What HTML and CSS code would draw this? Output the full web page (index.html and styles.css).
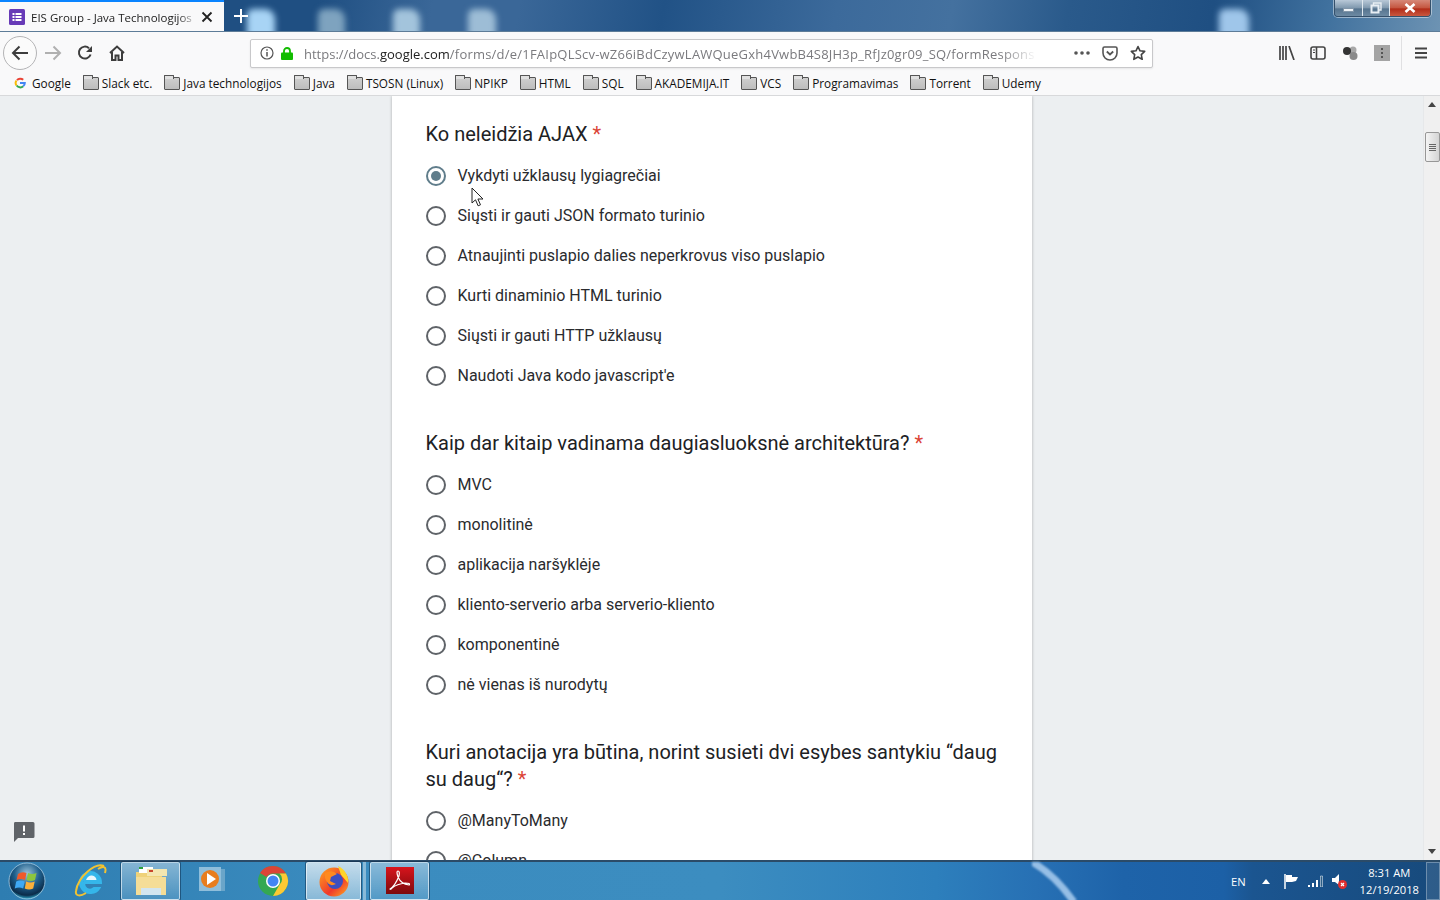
FILE: index.html
```html
<!DOCTYPE html>
<html lang="lt">
<head>
<meta charset="utf-8">
<title>EIS Group - Java Technologijos</title>
<link rel="stylesheet" href="styles.css">
</head>
<body>
<div class="screen">
  <header class="titlebar">
    <i class="patch p1"></i><i class="patch p2"></i><i class="patch p3"></i><i class="patch p4"></i><i class="patch p5"></i>
    <div class="tab">
      <svg class="favicon" viewBox="0 0 16 16"><rect width="16" height="16" rx="1.5" fill="#673ab7"/><g fill="#fff"><rect x="3.5" y="4" width="2" height="2"/><rect x="6.5" y="4" width="6" height="2"/><rect x="3.5" y="7" width="2" height="2"/><rect x="6.5" y="7" width="6" height="2"/><rect x="3.5" y="10" width="2" height="2"/><rect x="6.5" y="10" width="6" height="2"/></g></svg>
      <span class="tab-title">EIS Group - Java Technologijos</span>
      <svg class="tab-close" viewBox="0 0 12 12"><path d="M1.5 1.5l9 9M10.5 1.5l-9 9" stroke="#222" stroke-width="1.8" fill="none"/></svg>
    </div>
    <svg class="newtab" viewBox="0 0 14 14"><path d="M7 0v14M0 7h14" stroke="#fff" stroke-width="2" fill="none"/></svg>
    <div class="winctl">
      <div class="wbtn wmin"><span class="minbar"></span></div>
      <div class="wbtn wmax"><svg viewBox="0 0 12 12" width="12" height="12"><path d="M3.500 3V1h7.500v7H9" fill="none" stroke="#e8eef4" stroke-width="1.400"/><rect x="1.500" y="3.500" width="7" height="7" fill="none" stroke="#e8eef4" stroke-width="2"/></svg></div>
      <div class="wbtn wclose"><svg viewBox="0 0 12 10" width="12" height="10"><path d="M1.500 1l9 8M10.500 1l-9 8" stroke="#fff" stroke-width="2.600" fill="none"/></svg></div>
    </div>
  </header>

  <nav class="toolbar">
    <div class="backbtn"><svg viewBox="0 0 18 16" width="18" height="16"><path d="M17 8H2M8.500 1.500L2 8l6.500 6.500" fill="none" stroke="#3d3d3d" stroke-width="2"/></svg></div>
    <svg class="tb-ico fwd" viewBox="0 0 18 16" width="18" height="16"><path d="M1 8h15M9.500 1.500L16 8l-6.500 6.500" fill="none" stroke="#b0b0b0" stroke-width="2"/></svg>
    <svg class="tb-ico reload" viewBox="0 0 16 16" width="16" height="16"><path d="M13.600 9.500A6 6 0 1 1 12 3.200" fill="none" stroke="#3d3d3d" stroke-width="2"/><path d="M15 1v6H9z" fill="#3d3d3d"/></svg>
    <svg class="tb-ico home" viewBox="0 0 16 16" width="16" height="16"><path d="M1 8l7-6.500L15 8M3 7v8h3.500v-4.500h3V15H13V7" fill="none" stroke="#3d3d3d" stroke-width="2"/></svg>
    <div class="urlbar">
      <svg class="info" viewBox="0 0 14 14" width="14" height="14"><circle cx="7" cy="7" r="6" fill="none" stroke="#555" stroke-width="1.200"/><path d="M7 6v4.500M7 3.300v1.500" stroke="#555" stroke-width="1.500"/></svg>
      <svg class="lock" viewBox="0 0 12 13" width="12" height="13"><path d="M3 6V4a3 3 0 0 1 6 0v2" fill="none" stroke="#12bc00" stroke-width="1.800"/><rect y="5.500" width="12" height="7.500" rx="1" fill="#12bc00"/></svg>
      <div class="url"><span class="url-dim">https://docs.</span><span class="url-host">google.com</span><span class="url-dim url-path">/forms/d/e/1FAIpQLScv-wZ66iBdCzywLAWQueGxh4VwbB4S8JH3p_RfJz0gr09_SQ/formRespons</span></div>
      <svg class="dots" viewBox="0 0 16 4" width="16" height="4"><circle cx="2" cy="2" r="1.800" fill="#555"/><circle cx="8" cy="2" r="1.800" fill="#555"/><circle cx="14" cy="2" r="1.800" fill="#555"/></svg>
      <svg class="pocket" viewBox="0 0 16 15" width="16" height="15"><path d="M1 2.500a1.500 1.500 0 0 1 1.500-1.500h11A1.500 1.500 0 0 1 15 2.500V7A7 7 0 0 1 1 7z" fill="none" stroke="#555" stroke-width="1.600"/><path d="M4.800 5.500L8 8.500l3.200-3" fill="none" stroke="#555" stroke-width="1.800"/></svg>
      <svg class="star" viewBox="0 0 16 16" width="16" height="16"><path d="M8 1.500l2 4.300 4.700.6-3.400 3.200.9 4.700L8 12l-4.200 2.300.9-4.700L1.300 6.400 6 5.800z" fill="none" stroke="#444" stroke-width="1.600" stroke-linejoin="round"/></svg>
    </div>
    <div class="tools">
      <svg class="tool-lib" viewBox="0 0 16 14" width="16" height="14"><path d="M1 0v14M4 0v14M7 0v14M10 0l5 14" stroke="#444" stroke-width="1.700" fill="none"/></svg>
      <svg viewBox="0 0 16 14" width="16" height="14"><rect x="1" y="1" width="14" height="12" rx="2" fill="none" stroke="#444" stroke-width="1.600"/><path d="M6.500 1v12" stroke="#444" stroke-width="1.600"/><path d="M3 4h2M3 6.500h2" stroke="#444"/></svg>
      <svg viewBox="0 0 16 16" width="16" height="16"><circle cx="11" cy="5" r="3.500" fill="#a8a8a8"/><circle cx="11.500" cy="11" r="4" fill="#8a8a8a"/><circle cx="5" cy="6" r="4" fill="#333"/></svg>
      <div class="ext"><span></span><span></span><span></span></div>
      <span class="tools-sep"></span>
      <svg viewBox="0 0 14 12" width="14" height="12"><path d="M1 1.500h12M1 6h12M1 10.500h12" stroke="#444" stroke-width="1.800"/></svg>
    </div>
  </nav>

  <div class="bookmarks">
    <div class="bm bm-g"><svg viewBox="0 0 12 12" width="12" height="12"><path d="M3 3.200A4.300 4.300 0 0 1 9.200 2.800" fill="none" stroke="#ea4335" stroke-width="2"/><path d="M2.500 3.500a4.300 4.300 0 0 0 0 5" fill="none" stroke="#fbbc05" stroke-width="2"/><path d="M2.700 8.500a4.300 4.300 0 0 0 6.500.7" fill="none" stroke="#34a853" stroke-width="2"/><path d="M6 6h4.800q0 2.200-1.600 3.200" fill="none" stroke="#4285f4" stroke-width="2"/></svg><span>Google</span></div>
    <div class="bm"><i class="folder"></i><span>Slack etc.</span></div>
    <div class="bm"><i class="folder"></i><span>Java technologijos</span></div>
    <div class="bm"><i class="folder"></i><span>Java</span></div>
    <div class="bm"><i class="folder"></i><span>TSOSN (Linux)</span></div>
    <div class="bm"><i class="folder"></i><span>NPIKP</span></div>
    <div class="bm"><i class="folder"></i><span>HTML</span></div>
    <div class="bm"><i class="folder"></i><span>SQL</span></div>
    <div class="bm"><i class="folder"></i><span>AKADEMIJA.IT</span></div>
    <div class="bm"><i class="folder"></i><span>VCS</span></div>
    <div class="bm"><i class="folder"></i><span>Programavimas</span></div>
    <div class="bm"><i class="folder"></i><span>Torrent</span></div>
    <div class="bm"><i class="folder"></i><span>Udemy</span></div>
  </div>

  <main class="viewport">
    <div class="page">
      <div class="card">
        <section class="question">
          <h2 class="q-title">Ko neleidžia AJAX <span class="req">*</span></h2>
          <div class="opt"><i class="radio on"></i><span>Vykdyti užklausų lygiagrečiai</span></div>
          <div class="opt"><i class="radio"></i><span>Siųsti ir gauti JSON formato turinio</span></div>
          <div class="opt"><i class="radio"></i><span>Atnaujinti puslapio dalies neperkrovus viso puslapio</span></div>
          <div class="opt"><i class="radio"></i><span>Kurti dinaminio HTML turinio</span></div>
          <div class="opt"><i class="radio"></i><span>Siųsti ir gauti HTTP užklausų</span></div>
          <div class="opt"><i class="radio"></i><span>Naudoti Java kodo javascript'e</span></div>
        </section>
        <section class="question">
          <h2 class="q-title">Kaip dar kitaip vadinama daugiasluoksnė architektūra? <span class="req">*</span></h2>
          <div class="opt"><i class="radio"></i><span>MVC</span></div>
          <div class="opt"><i class="radio"></i><span>monolitinė</span></div>
          <div class="opt"><i class="radio"></i><span>aplikacija naršyklėje</span></div>
          <div class="opt"><i class="radio"></i><span>kliento-serverio arba serverio-kliento</span></div>
          <div class="opt"><i class="radio"></i><span>komponentinė</span></div>
          <div class="opt"><i class="radio"></i><span>nė vienas iš nurodytų</span></div>
        </section>
        <section class="question">
          <h2 class="q-title">Kuri anotacija yra būtina, norint susieti dvi esybes santykiu “daug su daug“? <span class="req">*</span></h2>
          <div class="opt"><i class="radio"></i><span>@ManyToMany</span></div>
          <div class="opt"><i class="radio"></i><span>@Column</span></div>
        </section>
      </div>
    </div>
    <div class="scrollbar">
      <svg class="sb-arrow" viewBox="0 0 8 5" width="8" height="5"><path d="M4 0l4 5H0z" fill="#444"/></svg>
      <div class="sb-thumb"><span></span><span></span><span></span><span></span></div>
      <svg class="sb-arrow sb-down" viewBox="0 0 8 5" width="8" height="5"><path d="M0 0h8L4 5z" fill="#444"/></svg>
    </div>
    <svg class="feedback" viewBox="0 0 22 21" width="22" height="21"><path d="M2 1h18a1.500 1.500 0 0 1 1.500 1.500v13A1.500 1.500 0 0 1 20 17H5l-4 4V2.500A1.500 1.500 0 0 1 2 1z" fill="#5f6368"/><path d="M10 4.500h2v6h-2zM10 12h2v2h-2z" fill="#fff"/></svg>
    <svg class="cursor" viewBox="0 0 13 20" width="13" height="20"><path d="M1 1v15l3.500-3.200 2.600 6 2.400-1-2.600-5.800H12z" fill="#fff" stroke="#222" stroke-width="1"/></svg>
  </main>

  <footer class="taskbar">
    <svg class="streak" viewBox="0 0 60 40" width="60" height="40"><path d="M0 0Q22 12 42 40" fill="none" stroke="#a9cdee" stroke-width="7" opacity=".85"/></svg>
    <div class="start"><svg viewBox="0 0 38 38" width="38" height="38"><defs><radialGradient id="orb" cx="50%" cy="30%" r="70%"><stop offset="0" stop-color="#9cc4dc"/><stop offset=".5" stop-color="#1f5f8c"/><stop offset=".85" stop-color="#0b2c4a"/><stop offset="1" stop-color="#2fa7c9"/></radialGradient></defs><circle cx="19" cy="19" r="18" fill="url(#orb)" stroke="#a8cde4" stroke-width=".8"/><path d="M10 12q4-3 8.500-1l-1.500 7q-4-2-8.500 0z" fill="#ef5a2b"/><path d="M20 11q4 2 8.500 0l-1.500 7q-4 2-8.500 0z" fill="#8cc63f"/><path d="M8.200 19.500q4-2 8.500 0l-1.500 7q-4-2-8.500 0z" fill="#3fa9f5"/><path d="M18.200 19.500q4 2 8.500 0l-1.500 7q-4 2-8.500 0z" fill="#fbb03b"/></svg></div>
    <div class="tb-app">
      <svg viewBox="0 0 34 34" width="34" height="34"><path d="M9 19h19a10.500 10.500 0 1 0-1.500 5H21q-3 3-7 1-3-2-3-6 1-5 5-6.500 5-1 7 3H13" fill="#35b6ea" stroke="#35b6ea" stroke-width="2" fill-rule="evenodd"/><path d="M13 16q2-5 6-4.500t4.500 4.500z" fill="#e8f6fc"/><path d="M31 2C22-2 5 13 3 27c-1 6 5 5 10 2M25 5c5-3 9-3 7 4" fill="none" stroke="#f1c232" stroke-width="2"/></svg>
    </div>
    <div class="tb-app active">
      <svg viewBox="0 0 32 30" width="32" height="30"><path d="M1 6h10l2 2h14v20H1z" fill="#efd27a"/><rect x="4" y="1" width="14" height="6" fill="#fff"/><rect x="4" y="1" width="4" height="2" fill="#2aa13b"/><rect x="12" y="3" width="20" height="7" fill="#f4e6b0"/><rect x="14" y="4" width="4" height="2" fill="#c9452c"/><path d="M1 11h30v18H1z" fill="#f5dd97"/><path d="M6 22h20v7H6z" fill="#d3e5ef"/></svg>
    </div>
    <div class="tb-app">
      <svg viewBox="0 0 30 30" width="30" height="30"><rect x="6" y="3" width="22" height="22" fill="#6aa5c9"/><rect x="2" y="1" width="22" height="24" fill="#8fbedb"/><circle cx="13" cy="13" r="9" fill="#e87d1e"/><path d="M10 7l9 6-9 6z" fill="#fff"/></svg>
    </div>
    <div class="tb-app">
      <svg viewBox="0 0 32 32" width="32" height="32"><circle cx="16" cy="16" r="15" fill="#34a853"/><path d="M16 1a15 15 0 0 1 13 7.500H16A7.500 7.500 0 0 0 9.500 12L3 8A15 15 0 0 1 16 1z" fill="#db4437"/><path d="M29 8.500A15 15 0 0 1 16 31l6.500-11.200A7.500 7.500 0 0 0 22.500 8.500z" fill="#fcc934"/><circle cx="16" cy="16" r="7" fill="#fff"/><circle cx="16" cy="16" r="5.500" fill="#4285f4"/></svg>
    </div>
    <div class="tb-app active bright">
      <svg viewBox="0 0 32 32" width="32" height="32"><defs><linearGradient id="ff" x1="0" y1="0" x2="1" y2="1"><stop offset="0" stop-color="#ffa51f"/><stop offset=".6" stop-color="#f0392b"/><stop offset="1" stop-color="#ffb01f"/></linearGradient></defs><circle cx="16" cy="17" r="14.500" fill="url(#ff)"/><path d="M20 1c6 3 11 9 10 17l-7-8z" fill="#ffd42a"/><circle cx="17" cy="16" r="8" fill="#3d4fc0"/><path d="M7 8q7-4 12 1l-6 3-1 4 6 3q-6 3-9-2-3-4-2-9z" fill="#ff8a1f"/></svg>
    </div>
    <span class="tb-grip"></span>
    <div class="tb-app active">
      <svg viewBox="0 0 30 30" width="30" height="30"><defs><linearGradient id="ad" x1="0" y1="0" x2="0" y2="1"><stop offset="0" stop-color="#d8141c"/><stop offset="1" stop-color="#7d0a0d"/></linearGradient></defs><rect x="1" y="1" width="28" height="27" fill="url(#ad)"/><path d="M5 23q5-3 9-13 1-5-1-5t0 6q3 7 11 8 2-2-4-2-8 1-13 5-2 2-2 1z" fill="none" stroke="#fff" stroke-width="1.200"/></svg>
    </div>
    <div class="tray">
      <span class="lang">EN</span>
      <svg class="tray-up" viewBox="0 0 8 5" width="8" height="5"><path d="M4 0l4 5H0z" fill="#fff"/></svg>
      <svg class="tray-flag" viewBox="0 0 16 15" width="16" height="15"><path d="M2 0v15" stroke="#fff" stroke-width="1.500"/><path d="M3 1h6v2h6l-2 4-4 1H3z" fill="#fff"/></svg>
      <svg viewBox="0 0 16 12" width="16" height="12"><path d="M1 10h2v2H1zM5 8h2v4H5zM9 5h2v7H9z" fill="#fff"/><path d="M13.500 1h2v11h-2z" fill="#2d5f86" stroke="#fff" stroke-width=".5"/></svg>
      <svg viewBox="0 0 16 15" width="16" height="15"><path d="M1 4h3l4-4v11l-4-3H1z" fill="#fff"/><circle cx="11.500" cy="10.500" r="4.500" fill="#e02f2f"/><path d="M10 9l3 3M13 9l-3 3" stroke="#fff" stroke-width="1.200"/></svg>
      <div class="clock"><span>8:31 AM</span><span>12/19/2018</span></div>
      <div class="showdesk"></div>
    </div>
  </footer>
</div>
</body>
</html>
```

FILE: styles.css
```css
* { box-sizing: border-box; }
html, body { margin: 0; height: 100%; }
body { overflow: hidden; font-family: "Open Sans", "Noto Sans", sans-serif; }
.screen { width: 1440px; height: 900px; display: flex; flex-direction: column; overflow: hidden; }

/* Title bar */
.titlebar {
  height: 32px; flex: none; display: flex; align-items: flex-start; position: relative; overflow: hidden;
  background: linear-gradient(100deg, #1f4f82 22%, #3a6798 30%, #3a6798 36%, #215286 46%, #3c6a9b 58%, #44719f 66%, #2a5a8b 74%, #1f4f82 84%, #40719e 92%, #6d93b3 100%);
  border-bottom: 1px solid #5d7c98;
}
.patch { position: absolute; top: 9px; height: 30px; filter: blur(3px); border-radius: 6px 10px 0 0; }
.p1 { left: 247px; width: 28px; background: #a8d4f5; }
.p2 { left: 318px; width: 27px; background: #7ea3bf; }
.p3 { left: 393px; width: 27px; background: #a3c4dc; }
.p4 { left: 468px; width: 28px; background: #9dbdd6; }
.p5 { left: 1219px; width: 30px; background: #9fc6ea; }
.tab { width: 224px; height: 32px; flex: none; background: #f9f9fa; border-top: 2px solid #0a84ff; display: flex; align-items: center; padding: 0 11px 0 9px; font-size: 11.5px; color: #222; position: relative; }
.favicon { width: 16px; height: 16px; flex: none; margin-right: 6px; }
.tab-title { flex: 1; white-space: nowrap; overflow: hidden; -webkit-mask-image: linear-gradient(90deg, #000 88%, transparent); mask-image: linear-gradient(90deg, #000 88%, transparent); }
.tab-close { width: 12px; height: 12px; flex: none; margin-left: 3px; }
.newtab { width: 14px; height: 14px; margin: 9px 0 0 10px; position: relative; }
.winctl { position: absolute; right: 9px; top: 0; width: 97px; height: 17px; display: flex; border: 1px solid #35506b; border-top: 0; border-radius: 0 0 4px 4px; overflow: hidden; box-shadow: 0 0 0 1px rgba(255,255,255,.45); }
.wbtn { display: flex; align-items: center; justify-content: center; height: 100%; }
.wmin { width: 28px; background: linear-gradient(#b9c9d8, #7f98ae 50%, #56748f 55%, #6d8aa3); border-right: 1px solid #dfe8ef; }
.minbar { width: 11px; height: 4px; margin-top: 3px; background: #eef3f7; border: 1px solid #8195a8; }
.wmax { width: 27px; background: linear-gradient(#b9c9d8, #7f98ae 50%, #56748f 55%, #6d8aa3); border-right: 1px solid #dfe8ef; }
.wclose { flex: 1; background: linear-gradient(#d68878, #c4553f 50%, #b22c18 55%, #c9583f); }

/* Toolbar */
.toolbar { height: 39px; flex: none; background: #f9f9fa; display: flex; align-items: center; padding: 3px 0 0 3px; }
.backbtn { width: 34px; height: 34px; flex: none; border: 1px solid #b4b4b6; border-radius: 50%; display: flex; align-items: center; justify-content: center; background: #fbfbfb; }
.fwd { margin-left: 7px; flex: none; }
.reload { margin-left: 15px; flex: none; }
.home { margin-left: 16px; flex: none; }
.urlbar { width: 903px; height: 29px; flex: none; margin-left: 125px; background: #fff; border: 1px solid #c8c8ca; border-radius: 2px; display: flex; align-items: center; padding: 0 6px 0 9px; font-family: "Open Sans", sans-serif; font-size: 13px; box-shadow: 0 1px 2px rgba(0,0,0,.08); }
.info { flex: none; }
.lock { flex: none; margin-left: 7px; }
.url { width: 733px; margin-left: 11px; padding-top: 1px; flex: none; white-space: nowrap; overflow: hidden; -webkit-mask-image: linear-gradient(90deg, #000 95%, transparent); mask-image: linear-gradient(90deg, #000 95%, transparent); }
.url-dim { color: #7a7a7e; }
.url-path { letter-spacing: .22px; }
.url-host { color: #222; }
.dots { margin-left: 37px; flex: none; }
.pocket { flex: none; margin-left: 12px; }
.star { flex: none; margin-left: 12px; }
.tools { display: flex; align-items: center; margin-left: 126px; gap: 16px; flex: none; }
.tool-lib { margin-right: -1px; }
.ext { width: 16px; height: 16px; background: #a4a4a4; display: flex; flex-direction: column; align-items: center; justify-content: center; gap: 2px; }
.ext span { width: 2px; height: 2px; background: #555; }
.tools-sep { width: 1px; height: 34px; background: #e0e0e2; margin: 0 -4px 0 -5px; }

/* Bookmarks */
.bookmarks { height: 25px; flex: none; background: #f9f9fa; display: flex; align-items: center; padding: 0 0 0 14px; gap: 12px; font-size: 11.8px; color: #111; border-bottom: 1px solid #d8d9db; white-space: nowrap; }
.bm { display: flex; align-items: center; gap: 3px; }
.bm-g { gap: 6px; }
.folder { display: block; width: 16px; height: 13px; position: relative; background: linear-gradient(#cfcfcf, #bdbdbd); border: 1px solid #555; border-radius: 1px; }
.folder::before { content: ""; position: absolute; left: -1px; top: -3px; width: 8px; height: 3px; border: 1px solid #555; border-bottom: 0; border-radius: 1px 1px 0 0; background: #e0e0e0; }

/* Page viewport */
.viewport { flex: 1; min-height: 0; position: relative; display: flex; background: #eceff1; overflow: hidden; }
.page { flex: 1; min-width: 0; padding-left: 392px; }
.card { width: 640px; background: #fff; box-shadow: 0 0 3px rgba(0,0,0,.28); padding: 25px 34px 0 33.5px; min-height: 800px; font-family: Roboto, sans-serif; }
.question { margin-bottom: 35px; }
.q-title { margin: 0 0 7px; font-size: 20px; font-weight: 400; line-height: 27px; color: #202124; }
.req { color: #db4437; }
.opt { height: 40px; display: flex; align-items: center; gap: 11.5px; font-size: 16px; color: #2a2b2e; }
.radio { width: 20px; height: 20px; flex: none; margin: 1px 0 0 .5px; border: 2px solid #5f6368; border-radius: 50%; display: flex; align-items: center; justify-content: center; }
.radio.on { border-color: #607d8b; }
.radio.on::after { content: ""; width: 10px; height: 10px; border-radius: 50%; background: #607d8b; }

.scrollbar { width: 17px; flex: none; background: #f0f0f0; border-left: 1px solid #e6e8ea; display: flex; flex-direction: column; align-items: center; position: relative; }
.sb-arrow { margin-top: 6px; flex: none; }
.sb-down { margin-top: auto; margin-bottom: 6px; }
.sb-thumb { position: absolute; top: 36px; left: 1px; width: 15px; height: 30px; background: linear-gradient(90deg, #f4f4f4, #d4d4d4); border: 1px solid #979797; border-radius: 2px; display: flex; flex-direction: column; align-items: center; justify-content: center; gap: 1px; }
.sb-thumb span { width: 7px; height: 1px; background: #666; }
.feedback { position: absolute; left: 13px; bottom: 18px; }
.cursor { position: absolute; left: 471px; top: 91px; }

/* Taskbar */
.taskbar {
  height: 40px; flex: none; display: flex; align-items: center; padding-left: 8px; position: relative; border-top: 2px solid #2b4b68;
  background: linear-gradient(90deg, #2e7db1 0, #3b8cbf 25%, #3c8dc0 50%, #2d7fbc 65%, #2770b4 72%, #1e63a9 78%, #1c60a6 85%, #1b5590 87%, #174a7c 100%);
}
.streak { position: absolute; left: 1032px; top: 0; filter: blur(.8px); }
.start { width: 38px; height: 38px; flex: none; margin-right: 14px; position: relative; }
.tb-app { width: 59px; height: 38px; flex: none; margin-right: 2px; display: flex; align-items: center; justify-content: center; border: 1px solid transparent; border-radius: 2px; position: relative; }
.tb-app.active { background: linear-gradient(rgba(255,255,255,.4), rgba(255,255,255,.12)); border-color: rgba(255,255,255,.6); box-shadow: 0 0 0 1px rgba(10,40,70,.5); }
.tb-app.bright { background: linear-gradient(rgba(255,255,255,.7), rgba(255,255,255,.4)); width: 55px; margin-left: 2px; }
.tb-grip { width: 3px; height: 38px; margin-right: 4px; background: rgba(255,255,255,.4); flex: none; }
.tray { margin-left: auto; display: flex; align-items: center; height: 100%; gap: 8px; color: #fff; font-family: "Open Sans", sans-serif; font-size: 11.2px; position: relative; }
.lang { margin-right: 8px; }
.tray-up { margin-right: 5px; }
.clock { display: flex; flex-direction: column; align-items: center; line-height: 17px; margin-left: 5px; }
.showdesk { width: 14px; height: 38px; margin-left: -1px; border: 1px solid rgba(255,255,255,.3); background: rgba(255,255,255,.1); }
```
